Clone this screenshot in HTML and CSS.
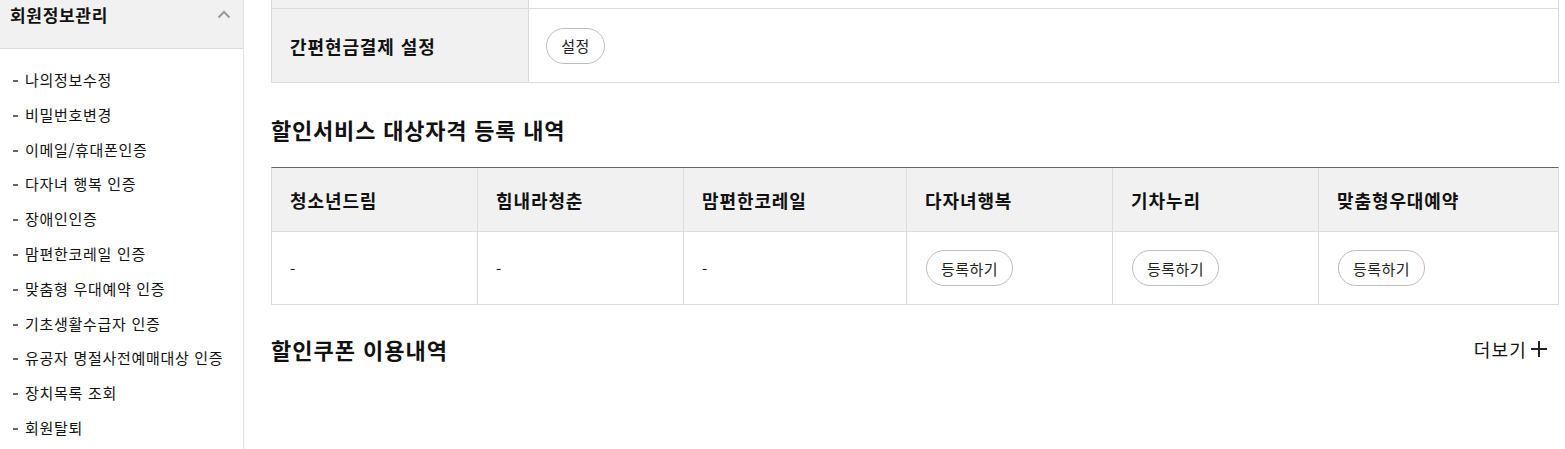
FILE: index.html
```html
<!DOCTYPE html>
<html lang="ko">
<head>
<meta charset="utf-8">
<title>회원정보관리</title>
<link rel="stylesheet" href="styles.css">
</head>
<body>
<div class="page">
  <aside class="sidebar">
    <div class="side-head">
      <span class="side-title">회원정보관리</span>
      <svg class="chev" width="14" height="9" viewBox="0 0 14 9"><path d="M1.5 7.5 L7 2 L12.5 7.5" fill="none" stroke="#999" stroke-width="2"/></svg>
    </div>
    <ul class="side-menu">
      <li>나의정보수정</li>
      <li>비밀번호변경</li>
      <li>이메일/휴대폰인증</li>
      <li>다자녀 행복 인증</li>
      <li>장애인인증</li>
      <li>맘편한코레일 인증</li>
      <li>맞춤형 우대예약 인증</li>
      <li>기초생활수급자 인증</li>
      <li>유공자 명절사전예매대상 인증</li>
      <li>장치목록 조회</li>
      <li>회원탈퇴</li>
    </ul>
  </aside>
  <main class="main">
    <div class="info-table">
      <div class="info-row cut">
        <div class="info-label"></div>
        <div class="info-value"></div>
      </div>
      <div class="info-row">
        <div class="info-label">간편현금결제 설정</div>
        <div class="info-value"><button class="pill pill-sm">설정</button></div>
      </div>
    </div>

    <h2 class="sec-title">할인서비스 대상자격 등록 내역</h2>
    <div class="grid-table">
      <div class="th">청소년드림</div>
      <div class="th">힘내라청춘</div>
      <div class="th">맘편한코레일</div>
      <div class="th">다자녀행복</div>
      <div class="th">기차누리</div>
      <div class="th last">맞춤형우대예약</div>
      <div class="td">-</div>
      <div class="td">-</div>
      <div class="td">-</div>
      <div class="td"><button class="pill">등록하기</button></div>
      <div class="td"><button class="pill">등록하기</button></div>
      <div class="td last"><button class="pill">등록하기</button></div>
    </div>

    <div class="sec-row">
      <h2 class="sec-title2">할인쿠폰 이용내역</h2>
      <a class="more">더보기<svg width="18" height="18" viewBox="0 0 18 18"><path d="M9 1 V17 M1 9 H17" stroke="#222" stroke-width="2"/></svg></a>
    </div>
  </main>
</div>
</body>
</html>
```
FILE: styles.css
```css
* { box-sizing: border-box; }
html, body { margin: 0; padding: 0; background: #fff; }
body {
  font-family: "Noto Sans CJK KR", "Noto Sans", sans-serif;
  color: #111;
  width: 1565px;
  height: 449px;
  overflow: hidden;
}
.page { display: flex; align-items: stretch; height: 449px; }

.sidebar {
  width: 244px;
  flex: none;
  border-right: 1px solid #e1e1e1;
}
.side-head {
  height: 49px;
  background: #f1f1f1;
  border-bottom: 1px solid #dcdcdc;
  display: flex;
  justify-content: space-between;
  align-items: flex-start;
  padding: 1px 12px 0 10px;
}
.side-title {
  font-size: 17px;
  font-weight: 700;
  letter-spacing: 0.7px;
  line-height: 28px;
}
.chev { margin-top: 9px; }
.side-menu {
  list-style: none;
  margin: 0;
  padding: 14px 0 0 0;
}
.side-menu li {
  font-size: 15px;
  line-height: 34.8px;
  height: 34.8px;
  letter-spacing: 0.7px;
  color: #111;
  padding-left: 25px;
  position: relative;
}
.side-menu li::before {
  content: "";
  position: absolute;
  left: 13px;
  top: 17px;
  width: 5px;
  height: 2px;
  background: #666;
}

.main {
  width: 1288px;
  margin-left: 27px;
  flex: none;
}

.info-table {
  border-left: 1px solid #dcdcdc;
  border-right: 1px solid #dcdcdc;
}
.info-row {
  display: flex;
  height: 74px;
  border-bottom: 1px solid #dcdcdc;
}
.info-row.cut { height: 9px; }
.info-label {
  width: 257px;
  background: #f1f1f1;
  border-right: 1px solid #dcdcdc;
  font-size: 18px;
  font-weight: 700;
  letter-spacing: 0.9px;
  padding-left: 18px;
  display: flex;
  align-items: center;
}
.info-value {
  flex: 1;
  display: flex;
  align-items: center;
  padding-left: 17px;
}

.pill {
  height: 36px;
  border: 1px solid #bdbdbd;
  border-radius: 18px;
  background: #fff;
  font-family: inherit;
  font-size: 15px;
  color: #222;
  padding: 0;
  width: 87px;
  letter-spacing: 0.5px;
  cursor: pointer;
}
.pill-sm { width: 59px; }

.sec-title {
  margin: 0;
  padding-top: 30px;
  height: 84px;
  font-size: 22px;
  font-weight: 700;
  letter-spacing: 0.8px;
  line-height: 32px;
}

.grid-table {
  display: grid;
  grid-template-columns: 206px 206px 223px 206px 206px 1fr;
  border-top: 1px solid #666;
  border-left: 1px solid #dcdcdc;
  border-right: 1px solid #dcdcdc;
}
.th, .td {
  border-right: 1px solid #dcdcdc;
  border-bottom: 1px solid #dcdcdc;
  display: flex;
  align-items: center;
  padding-left: 18px;
}
.th.last, .td.last { border-right: 0; }
.th {
  height: 64px;
  background: #f1f1f1;
  font-size: 18px;
  font-weight: 700;
  letter-spacing: 0.9px;
}
.td {
  height: 73px;
  font-size: 15px;
}
.td .pill { margin-left: 1px; }

.sec-row {
  display: flex;
  justify-content: space-between;
  align-items: center;
  margin-top: 28px;
  height: 32px;
}
.sec-title2 {
  margin: 0;
  font-size: 22px;
  font-weight: 700;
  letter-spacing: 1px;
  line-height: 32px;
}
.more {
  display: flex;
  align-items: center;
  gap: 3px;
  font-size: 18px;
  color: #111;
  letter-spacing: 1.2px;
  margin-right: 11px;
}
```
